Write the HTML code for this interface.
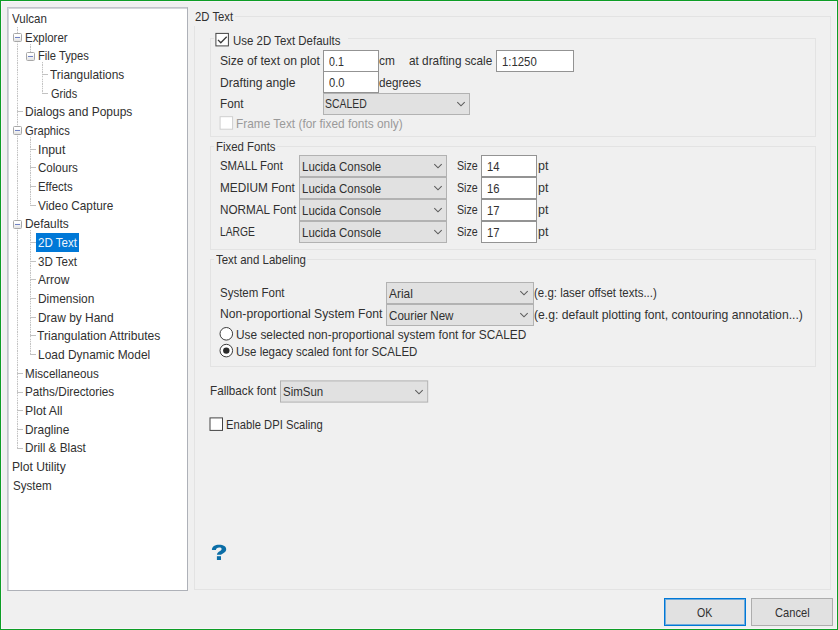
<!DOCTYPE html>
<html><head><meta charset="utf-8"><title>Preferences</title><style>
html,body{margin:0;padding:0}
body{width:838px;height:630px;position:relative;overflow:hidden;background:#f0f0f0;font-family:"Liberation Sans",sans-serif;font-size:12.6px;color:#000}
.a{position:absolute;box-sizing:border-box}
.t{position:absolute;white-space:nowrap;line-height:16px;height:16px;transform-origin:0 50%;color:#303030}
.frame{left:0;top:0;width:838px;height:630px;border:1px solid #0e9e26}
.frame2{left:1px;top:1px;width:836px;height:628px;border:1px solid #f9f4f9}
.tree{background:#fff;border:1px solid #aeb1b8;border-left-color:#c1c4ca;border-top-color:#c1c4ca}
.tree2{border-left:1px solid #d3d5d9;border-top:1px solid #d3d5d9}
.grp{border:1px solid #e3e3e3}
.lblbg{background:#f0f0f0}
.inp{background:#fff;border:1px solid #939393}
.cmb{background:#e1e1e1;border:1px solid #b2b2b2}
.gap{background:#c9c9c9}
.btn{background:#e1e1e1;border:1px solid #adadad}
.sel{background:#0078d7}
.vl{width:1px;background:repeating-linear-gradient(to bottom,#c4c4c4 0,#c4c4c4 1.3px,#efefef 1.3px,#efefef 2.36px)}
.hl{height:1px;background:#c2c2c2}
.pm{background:linear-gradient(#fff 20%,#e3e3e3);border:1px solid #a8a8a8;border-radius:1.5px;width:9px;height:9px}
.pm i{position:absolute;left:1px;top:3px;width:5px;height:1px;background:#7082c4}
</style></head>
<body>
<div class="a frame" style="left:0px;top:0px;width:838px;height:630px"></div>
<div class="a frame2" style="left:1px;top:1px;width:836px;height:628px"></div>
<div class="a tree" style="left:7px;top:7px;width:181px;height:584px"></div>
<div class="a tree2" style="left:8px;top:8px;width:179px;height:582px"></div>
<div class="a vl" style="left:17px;top:27px;width:1px;height:421px"></div>
<div class="a hl" style="left:17px;top:111px;width:6px;height:1px"></div>
<div class="a hl" style="left:17px;top:373px;width:6px;height:1px"></div>
<div class="a hl" style="left:17px;top:392px;width:6px;height:1px"></div>
<div class="a hl" style="left:17px;top:410px;width:6px;height:1px"></div>
<div class="a hl" style="left:17px;top:429px;width:6px;height:1px"></div>
<div class="a hl" style="left:17px;top:448px;width:6px;height:1px"></div>
<div class="a vl" style="left:30px;top:44px;width:1px;height:11px"></div>
<div class="a vl" style="left:42px;top:62px;width:1px;height:31px"></div>
<div class="a hl" style="left:42px;top:74px;width:6px;height:1px"></div>
<div class="a hl" style="left:42px;top:93px;width:6px;height:1px"></div>
<div class="a vl" style="left:30px;top:137px;width:1px;height:68px"></div>
<div class="a hl" style="left:30px;top:149px;width:6px;height:1px"></div>
<div class="a hl" style="left:30px;top:167px;width:6px;height:1px"></div>
<div class="a hl" style="left:30px;top:186px;width:6px;height:1px"></div>
<div class="a hl" style="left:30px;top:205px;width:6px;height:1px"></div>
<div class="a vl" style="left:30px;top:230px;width:1px;height:124px"></div>
<div class="a hl" style="left:30px;top:242px;width:6px;height:1px"></div>
<div class="a hl" style="left:30px;top:261px;width:6px;height:1px"></div>
<div class="a hl" style="left:30px;top:279px;width:6px;height:1px"></div>
<div class="a hl" style="left:30px;top:298px;width:6px;height:1px"></div>
<div class="a hl" style="left:30px;top:317px;width:6px;height:1px"></div>
<div class="a hl" style="left:30px;top:335px;width:6px;height:1px"></div>
<div class="a hl" style="left:30px;top:354px;width:6px;height:1px"></div>
<div class="a pm" style="left:13px;top:33px;width:9px;height:9px"><i></i></div>
<div class="a pm" style="left:26px;top:52px;width:9px;height:9px"><i></i></div>
<div class="a pm" style="left:13px;top:126px;width:9px;height:9px"><i></i></div>
<div class="a pm" style="left:13px;top:220px;width:9px;height:9px"><i></i></div>
<div class="a sel" style="left:36px;top:233px;width:43px;height:19px"></div>
<div class="a grp" style="left:194px;top:16px;width:637px;height:574px"></div>
<div class="a lblbg" style="left:193px;top:10px;width:42px;height:16px"></div>
<div class="a grp" style="left:210px;top:38px;width:606px;height:99px"></div>
<div class="a lblbg" style="left:214px;top:32px;width:134px;height:14px"></div>
<div class="a grp" style="left:210px;top:146px;width:606px;height:104px"></div>
<div class="a lblbg" style="left:214px;top:140px;width:63px;height:14px"></div>
<div class="a grp" style="left:210px;top:259px;width:606px;height:108px"></div>
<div class="a lblbg" style="left:214px;top:253px;width:93px;height:14px"></div>
<svg class="a" style="left:214px;top:31px" width="17" height="17" viewBox="0 0 17 17"><rect x="1.90" y="2.40" width="12.5" height="12.5" fill="#fff" stroke="#444" stroke-width="1"/><path d="M4.00 8.90 L6.80 11.80 L12.70 5.70" fill="none" stroke="#3a3a3a" stroke-width="1.3"/></svg>
<div class="a inp" style="left:323px;top:50px;width:56px;height:22px"></div>
<div class="a inp" style="left:496px;top:50px;width:78px;height:22px"></div>
<div class="a inp" style="left:323px;top:71px;width:56px;height:22px"></div>
<div class="a cmb" style="left:323px;top:93px;width:147px;height:22px"></div>
<svg class="a" style="left:454.70px;top:99.00px" width="12" height="10" viewBox="0 0 12 10"><path d="M2.3 3.1 L6 6.8 L9.7 3.1" fill="none" stroke="#5c5c5c" stroke-width="1.05"/></svg>
<svg class="a" style="left:218px;top:115px" width="17" height="17" viewBox="0 0 17 17"><rect x="2.10" y="1.70" width="12.5" height="12.5" fill="#fff" stroke="#cfcfcf" stroke-width="1"/></svg>
<div class="a cmb" style="left:299px;top:155px;width:148px;height:22px"></div>
<svg class="a" style="left:431.50px;top:161.00px" width="12" height="10" viewBox="0 0 12 10"><path d="M2.3 3.1 L6 6.8 L9.7 3.1" fill="none" stroke="#5c5c5c" stroke-width="1.05"/></svg>
<div class="a inp" style="left:481px;top:155px;width:56px;height:22px"></div>
<div class="a cmb" style="left:299px;top:177px;width:148px;height:22px"></div>
<svg class="a" style="left:431.50px;top:183.00px" width="12" height="10" viewBox="0 0 12 10"><path d="M2.3 3.1 L6 6.8 L9.7 3.1" fill="none" stroke="#5c5c5c" stroke-width="1.05"/></svg>
<div class="a inp" style="left:481px;top:177px;width:56px;height:22px"></div>
<div class="a cmb" style="left:299px;top:199px;width:148px;height:22px"></div>
<svg class="a" style="left:431.50px;top:205.00px" width="12" height="10" viewBox="0 0 12 10"><path d="M2.3 3.1 L6 6.8 L9.7 3.1" fill="none" stroke="#5c5c5c" stroke-width="1.05"/></svg>
<div class="a inp" style="left:481px;top:199px;width:56px;height:22px"></div>
<div class="a cmb" style="left:299px;top:221px;width:148px;height:22px"></div>
<svg class="a" style="left:431.50px;top:227.00px" width="12" height="10" viewBox="0 0 12 10"><path d="M2.3 3.1 L6 6.8 L9.7 3.1" fill="none" stroke="#5c5c5c" stroke-width="1.05"/></svg>
<div class="a inp" style="left:481px;top:221px;width:56px;height:22px"></div>
<div class="a cmb" style="left:386px;top:282px;width:148px;height:22px"></div>
<svg class="a" style="left:518.30px;top:288.00px" width="12" height="10" viewBox="0 0 12 10"><path d="M2.3 3.1 L6 6.8 L9.7 3.1" fill="none" stroke="#5c5c5c" stroke-width="1.05"/></svg>
<div class="a cmb" style="left:386px;top:304px;width:148px;height:22px"></div>
<svg class="a" style="left:518.30px;top:310.00px" width="12" height="10" viewBox="0 0 12 10"><path d="M2.3 3.1 L6 6.8 L9.7 3.1" fill="none" stroke="#5c5c5c" stroke-width="1.05"/></svg>
<svg class="a" style="left:217px;top:324px" width="18" height="18" viewBox="0 0 18 18"><circle cx="9.30" cy="9.80" r="6.3" fill="#fff" stroke="#3c3c3c" stroke-width="1"/></svg>
<svg class="a" style="left:217px;top:341px" width="18" height="18" viewBox="0 0 18 18"><circle cx="9.30" cy="9.60" r="6.3" fill="#fff" stroke="#3c3c3c" stroke-width="1"/><circle cx="9.30" cy="9.60" r="3.2" fill="#2a2a2a"/></svg>
<svg class="a" style="left:278px;top:378px" width="152" height="27" viewBox="0 0 152 27"><rect x="2.5" y="2.9" width="147.2" height="21.2" fill="#e1e1e1" stroke="#b2b2b2" stroke-width="1"/></svg>
<svg class="a" style="left:412.50px;top:387.00px" width="12" height="10" viewBox="0 0 12 10"><path d="M2.3 3.1 L6 6.8 L9.7 3.1" fill="none" stroke="#5c5c5c" stroke-width="1.05"/></svg>
<svg class="a" style="left:208px;top:416px" width="17" height="17" viewBox="0 0 17 17"><rect x="2.00" y="1.90" width="12.5" height="12.5" fill="#fff" stroke="#444" stroke-width="1"/></svg>
<svg class="a" style="left:206px;top:540px" width="28" height="24" viewBox="0 0 28 24"><path d="M5.9 9.9 C5.9 6.6 9 4.8 13.1 4.8 C17.4 4.8 20.2 6.4 20.2 9.2 C20.2 12 17.6 13.1 16 13.9 C15.4 14.2 15.2 14.4 15.2 14.8 L10.9 14.8 C10.9 12.9 12.2 12 14.1 10.9 C15.2 10.3 15.6 9.8 15.6 9 C15.6 8 14.6 7.6 13.1 7.6 C11.3 7.6 10 8.5 9.9 10 Z" fill="#0b6ea7"/><rect x="10.9" y="16.2" width="4.1" height="3.8" fill="#0b6ea7"/></svg>
<div class="a btn" style="left:664px;top:598px;width:82px;height:28px;border:1px solid #0078d7;box-shadow:inset 0 0 0 1px rgba(0,120,215,.5)"></div>
<div class="a btn" style="left:751px;top:598px;width:82px;height:28px"></div>
<span class="t" style="left:11.90px;top:10.95px;transform:scaleX(0.9149)">Vulcan</span>
<span class="t" style="left:24.79px;top:29.62px;transform:scaleX(0.9081)">Explorer</span>
<span class="t" style="left:37.71px;top:48.29px;transform:scaleX(0.8896)">File Types</span>
<span class="t" style="left:50.10px;top:66.96px;transform:scaleX(0.9433)">Triangulations</span>
<span class="t" style="left:51.30px;top:85.63px;transform:scaleX(0.8694)">Grids</span>
<span class="t" style="left:24.95px;top:104.30px;transform:scaleX(0.9522)">Dialogs and Popups</span>
<span class="t" style="left:25.30px;top:122.97px;transform:scaleX(0.8883)">Graphics</span>
<span class="t" style="left:37.62px;top:141.64px;transform:scaleX(0.9778)">Input</span>
<span class="t" style="left:38.40px;top:160.31px;transform:scaleX(0.9188)">Colours</span>
<span class="t" style="left:37.70px;top:178.98px;transform:scaleX(0.9034)">Effects</span>
<span class="t" style="left:37.60px;top:197.65px;transform:scaleX(0.9367)">Video Capture</span>
<span class="t" style="left:24.96px;top:216.32px;transform:scaleX(0.9443)">Defaults</span>
<span class="t" style="left:37.60px;top:234.99px;color:#eef5fd;transform:scaleX(0.9191)">2D Text</span>
<span class="t" style="left:37.60px;top:253.66px;transform:scaleX(0.9191)">3D Text</span>
<span class="t" style="left:37.60px;top:272.33px;transform:scaleX(0.9529)">Arrow</span>
<span class="t" style="left:37.65px;top:291.00px;transform:scaleX(0.9472)">Dimension</span>
<span class="t" style="left:37.65px;top:309.67px;transform:scaleX(0.9468)">Draw by Hand</span>
<span class="t" style="left:37.40px;top:328.34px;transform:scaleX(0.9609)">Triangulation Attributes</span>
<span class="t" style="left:37.65px;top:347.01px;transform:scaleX(0.9485)">Load Dynamic Model</span>
<span class="t" style="left:24.98px;top:365.68px;transform:scaleX(0.9235)">Miscellaneous</span>
<span class="t" style="left:24.97px;top:384.35px;transform:scaleX(0.9293)">Paths/Directories</span>
<span class="t" style="left:24.93px;top:403.02px;transform:scaleX(0.9733)">Plot All</span>
<span class="t" style="left:24.96px;top:421.69px;transform:scaleX(0.9434)">Dragline</span>
<span class="t" style="left:24.96px;top:440.36px;transform:scaleX(0.9353)">Drill &amp; Blast</span>
<span class="t" style="left:11.94px;top:459.03px;transform:scaleX(0.9607)">Plot Utility</span>
<span class="t" style="left:12.90px;top:477.70px;transform:scaleX(0.9206)">System</span>
<span class="t" style="left:194.60px;top:9.00px;transform:scaleX(0.8983)">2D Text</span>
<span class="t" style="left:232.70px;top:33.00px;transform:scaleX(0.9094)">Use 2D Text Defaults</span>
<span class="t" style="left:219.60px;top:53.20px;transform:scaleX(0.9634)">Size of text on plot</span>
<span class="t" style="left:328.70px;top:53.50px;transform:scaleX(0.8456)">0.1</span>
<span class="t" style="left:378.90px;top:53.00px;transform:scaleX(0.9450)">cm</span>
<span class="t" style="left:409.25px;top:53.00px;transform:scaleX(0.9364)">at drafting scale</span>
<span class="t" style="left:502.00px;top:53.50px;transform:scaleX(0.9022)">1:1250</span>
<span class="t" style="left:220.24px;top:75.00px;transform:scaleX(0.9625)">Drafting angle</span>
<span class="t" style="left:328.70px;top:75.00px;transform:scaleX(0.8856)">0.0</span>
<span class="t" style="left:378.90px;top:75.20px;transform:scaleX(0.9267)">degrees</span>
<span class="t" style="left:220.07px;top:95.70px;transform:scaleX(0.9311)">Font</span>
<span class="t" style="left:324.80px;top:96.30px;transform:scaleX(0.8271)">SCALED</span>
<span class="t" style="left:235.81px;top:115.50px;color:#9a9a9a;transform:scaleX(0.9424)">Frame Text (for fixed fonts only)</span>
<span class="t" style="left:216.09px;top:139.25px;transform:scaleX(0.9055)">Fixed Fonts</span>
<span class="t" style="left:220.00px;top:158.00px;transform:scaleX(0.9036)">SMALL Font</span>
<span class="t" style="left:219.76px;top:180.00px;transform:scaleX(0.9373)">MEDIUM Font</span>
<span class="t" style="left:219.77px;top:201.75px;transform:scaleX(0.9296)">NORMAL Font</span>
<span class="t" style="left:220.18px;top:223.50px;transform:scaleX(0.8185)">LARGE</span>
<span class="t" style="left:215.60px;top:252.25px;transform:scaleX(0.9106)">Text and Labeling</span>
<span class="t" style="left:220.00px;top:284.75px;transform:scaleX(0.9131)">System Font</span>
<span class="t" style="left:219.83px;top:306.40px;transform:scaleX(0.9672)">Non-proportional System Font</span>
<span class="t" style="left:388.50px;top:285.50px;transform:scaleX(0.9469)">Arial</span>
<span class="t" style="left:388.60px;top:307.50px;transform:scaleX(0.9211)">Courier New</span>
<span class="t" style="left:534.00px;top:285.00px;transform:scaleX(0.9104)">(e.g: laser offset texts...)</span>
<span class="t" style="left:534.00px;top:306.50px;transform:scaleX(0.9674)">(e.g: default plotting font, contouring annotation...)</span>
<span class="t" style="left:236.30px;top:326.75px;transform:scaleX(0.9425)">Use selected non-proportional system font for SCALED</span>
<span class="t" style="left:236.30px;top:343.50px;transform:scaleX(0.9124)">Use legacy scaled font for SCALED</span>
<span class="t" style="left:209.87px;top:383.30px;transform:scaleX(0.9281)">Fallback font</span>
<span class="t" style="left:283.00px;top:384.40px;transform:scaleX(0.9117)">SimSun</span>
<span class="t" style="left:226.31px;top:417.25px;transform:scaleX(0.8920)">Enable DPI Scaling</span>
<span class="t" style="left:696.50px;top:605.00px;transform:scaleX(0.8406)">OK</span>
<span class="t" style="left:774.60px;top:605.00px;transform:scaleX(0.8827)">Cancel</span>
<span class="t" style="left:302.29px;top:158.75px;transform:scaleX(0.9125)">Lucida Console</span>
<span class="t" style="left:456.90px;top:158.00px;transform:scaleX(0.8451)">Size</span>
<span class="t" style="left:487.00px;top:158.75px;transform:scaleX(0.8926)">14</span>
<span class="t" style="left:537.80px;top:158.00px;transform:scaleX(0.9905)">pt</span>
<span class="t" style="left:302.29px;top:180.75px;transform:scaleX(0.9125)">Lucida Console</span>
<span class="t" style="left:456.90px;top:180.00px;transform:scaleX(0.8451)">Size</span>
<span class="t" style="left:487.00px;top:180.75px;transform:scaleX(0.8926)">16</span>
<span class="t" style="left:537.80px;top:180.00px;transform:scaleX(0.9905)">pt</span>
<span class="t" style="left:302.29px;top:202.75px;transform:scaleX(0.9125)">Lucida Console</span>
<span class="t" style="left:456.90px;top:202.00px;transform:scaleX(0.8451)">Size</span>
<span class="t" style="left:487.00px;top:202.75px;transform:scaleX(0.8926)">17</span>
<span class="t" style="left:537.80px;top:202.00px;transform:scaleX(0.9905)">pt</span>
<span class="t" style="left:302.29px;top:224.75px;transform:scaleX(0.9125)">Lucida Console</span>
<span class="t" style="left:456.90px;top:224.00px;transform:scaleX(0.8451)">Size</span>
<span class="t" style="left:487.00px;top:224.75px;transform:scaleX(0.8926)">17</span>
<span class="t" style="left:537.80px;top:224.00px;transform:scaleX(0.9905)">pt</span>
</body></html>
